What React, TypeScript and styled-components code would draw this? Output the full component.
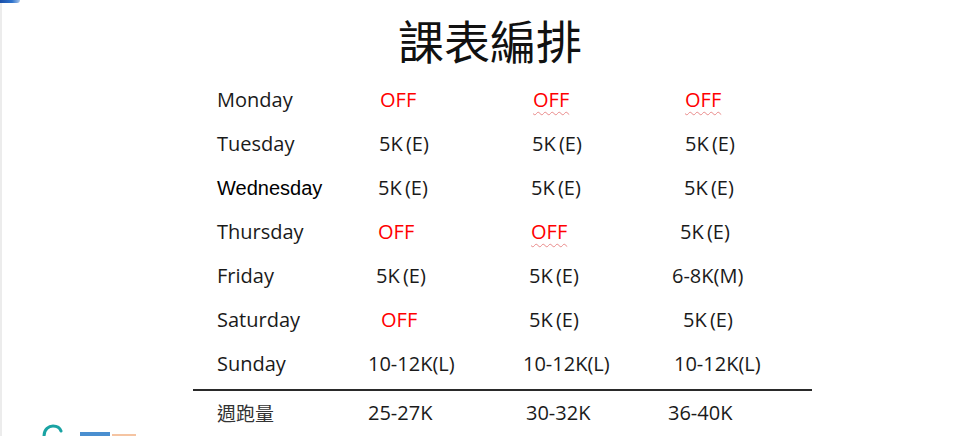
import React from 'react';
import styled, { createGlobalStyle } from 'styled-components';

//#region Styled
const GlobalStyle = createGlobalStyle`
  html, body {
    margin: 0;
    padding: 0;
    background: #ffffff;
  }
`;

const Slide = styled.div`
  position: relative;
  width: 960px;
  height: 436px;
  overflow: hidden;
  background: #ffffff;
  box-shadow: inset 2px 0 0 #ececec;
  font-family: 'Open Sans', 'Noto Sans', sans-serif;
  color: #1a1a1a;
`;

const CornerArc = styled.div`
  position: absolute;
  top: 0;
  left: 0;
  width: 20px;
  height: 3px;
  border-radius: 0 0 4px 0;
  background: linear-gradient(90deg, #1a4fa8 0%, #2f73cc 60%, #a9c6ea 100%);
`;

const FooterLogo = styled.svg`
  position: absolute;
  left: 40px;
  bottom: 0;
`;

const Title = styled.h1`
  margin: 0;
  padding: 16px 0 0 20px;
  height: 46px;
  text-align: center;
  font-family: 'Noto Sans CJK TC', 'Noto Sans CJK SC', sans-serif;
  font-weight: 400;
  font-size: 46px;
  line-height: 46px;
  color: #111111;
`;

const Table = styled.div`
  margin: 16px 0 0 193px;
  width: 619px;
  display: flex;
  flex-direction: column;
`;

const Row = styled.div<{ $height: number }>`
  display: grid;
  grid-template-columns: 151px 155px 145px 1fr;
  align-items: center;
  height: ${(p) => p.$height}px;
  padding-left: 24px;
`;

const Divider = styled.div`
  margin-top: 3px;
  height: 2px;
  background: #2a2a2a;
`;

const Day = styled.div<{ $plain?: boolean }>`
  font-family: ${(p) =>
    p.$plain ? "'Liberation Sans', Arial, sans-serif" : "'Open Sans', sans-serif"};
  font-size: 20px;
  line-height: 44px;
  color: ${(p) => (p.$plain ? '#000000' : '#1a1a1a')};
  white-space: nowrap;
`;

const Cjk = styled.div`
  font-family: 'Noto Sans CJK TC', 'Noto Sans CJK SC', sans-serif;
  font-size: 19px;
  line-height: 38px;
  color: #333333;
`;

const Cell = styled.div<{ $indent: number; $off?: boolean; $squiggle?: boolean }>`
  padding-left: ${(p) => p.$indent}px;
  font-size: 20px;
  line-height: 44px;
  white-space: nowrap;
  word-spacing: -2px;
  color: ${(p) => (p.$off ? '#ff0000' : '#1a1a1a')};
  text-decoration: ${(p) => (p.$squiggle ? 'underline wavy #e98a8a' : 'none')};
  text-decoration-thickness: 1px;
  text-underline-offset: 4px;
`;
//#endregion

interface Entry {
  text: string;
  indent: number;
  off?: boolean;
  squiggle?: boolean;
}

interface Day {
  name: string;
  plain?: boolean;
  cells: Entry[];
}

const easy = (indent: number): Entry => ({ text: '5K (E)', indent });
const rest = (indent: number, squiggle = false): Entry => ({
  text: 'OFF',
  indent,
  off: true,
  squiggle,
});

const schedule: Day[] = [
  { name: 'Monday', cells: [rest(12), rest(10, true), rest(17, true)] },
  { name: 'Tuesday', cells: [easy(11), easy(9), easy(17)] },
  { name: 'Wednesday', plain: true, cells: [easy(10), easy(8), easy(16)] },
  { name: 'Thursday', cells: [rest(10), rest(8, true), easy(12)] },
  { name: 'Friday', cells: [easy(8), easy(6), { text: '6-8K(M)', indent: 4 }] },
  { name: 'Saturday', cells: [rest(13), easy(6), easy(15)] },
  {
    name: 'Sunday',
    cells: [
      { text: '10-12K(L)', indent: 0 },
      { text: '10-12K(L)', indent: 0 },
      { text: '10-12K(L)', indent: 6 },
    ],
  },
];

const totals: Entry[] = [
  { text: '25-27K', indent: 0 },
  { text: '30-32K', indent: 3 },
  { text: '36-40K', indent: 0 },
];

const Logo = () => (
  <FooterLogo width="110" height="12" viewBox="0 0 110 12">
    <path
      d="M4 12 C4 5 9 2 13 2 C17 2 20 4 21 7"
      fill="none"
      stroke="#1aa3a3"
      strokeWidth="3"
      strokeLinecap="round"
    />
    <rect x="40" y="8" width="30" height="4" fill="#4a8fd0" />
    <rect x="72" y="10" width="24" height="2" fill="#f5c4a2" />
  </FooterLogo>
);

export default function App() {
  return (
    <Slide>
      <GlobalStyle />
      <CornerArc />
      <Title>課表編排</Title>
      <Table>
        {schedule.map((day) => (
          <Row key={day.name} $height={44}>
            <Day $plain={day.plain}>{day.name}</Day>
            {day.cells.map((c, i) => (
              <Cell key={i} $indent={c.indent} $off={c.off} $squiggle={c.squiggle}>
                {c.text}
              </Cell>
            ))}
          </Row>
        ))}
        <Divider />
        <Row $height={38}>
          <Cjk>週跑量</Cjk>
          {totals.map((c, i) => (
            <Cell key={i} $indent={c.indent}>
              {c.text}
            </Cell>
          ))}
        </Row>
      </Table>
      <Logo />
    </Slide>
  );
}
